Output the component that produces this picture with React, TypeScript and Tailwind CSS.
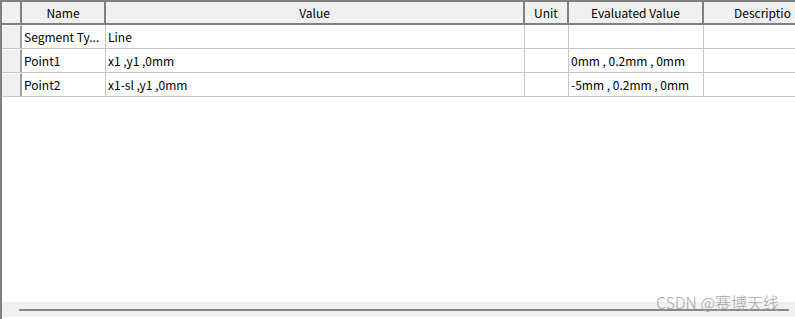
import React from "react";

const cols = "grid-cols-[20px_84px_419px_44px_135px_1fr]";

const rows: [string, string, string, string, string][] = [
  ["Segment Ty...", "Line", "", "", ""],
  ["Point1", "x1 ,y1 ,0mm", "", "0mm , 0.2mm , 0mm", ""],
  ["Point2", "x1-sl ,y1 ,0mm", "", "-5mm , 0.2mm , 0mm", ""],
];

export default function App() {
  return (
    <div
      className="relative w-[795px] h-[319px] bg-white overflow-hidden flex flex-col border-l-2 border-t-2 border-[#808080] text-[12px] text-black"
      style={{ fontFamily: '"Noto Sans CJK SC", "Noto Sans", sans-serif' }}
    >
      <div className={`grid ${cols} h-[23px] bg-[#f0f0f0] border-b-2 border-[#808080]`}>
        <div className="border-r-2 border-[#808080]" />
        <div className="border-r-2 border-[#808080] flex items-center justify-center leading-none">Name</div>
        <div className="border-r-2 border-[#808080] flex items-center justify-center leading-none">Value</div>
        <div className="border-r-2 border-[#808080] flex items-center justify-center leading-none">Unit</div>
        <div className="border-r-2 border-[#808080] flex items-center justify-center leading-none">Evaluated Value</div>
        <div className="flex items-center pl-[30px] leading-none whitespace-nowrap overflow-hidden">Descriptio</div>
      </div>
      <div className="flex-1">
        {rows.map((r, i) => (
          <div key={i} className={`grid ${cols} h-[24px] border-b border-[#c8c8c8]`}>
            <div className="bg-[#f0f0f0] border-r-2 border-[#a0a0a0] border-t border-t-white" />
            {r.map((c, j) => (
              <div
                key={j}
                className={`flex items-center pl-[2px] leading-none whitespace-nowrap overflow-hidden ${j < 4 ? "border-r border-[#c8c8c8]" : ""}`}
              >
                {c}
              </div>
            ))}
          </div>
        ))}
      </div>
      <div className="h-[15px] mb-[2px] bg-[#f0f0f0] flex items-center pl-[17px]">
        <div className="h-[2px] w-[770px] bg-[#888888]" />
      </div>
      <div
        className="absolute right-[16px] bottom-[9px] text-[16px] font-light text-[#a8a8a8] leading-none"
        style={{ fontFamily: '"Noto Sans CJK SC", sans-serif' }}
      >
        CSDN @赛博天线
      </div>
    </div>
  );
}
